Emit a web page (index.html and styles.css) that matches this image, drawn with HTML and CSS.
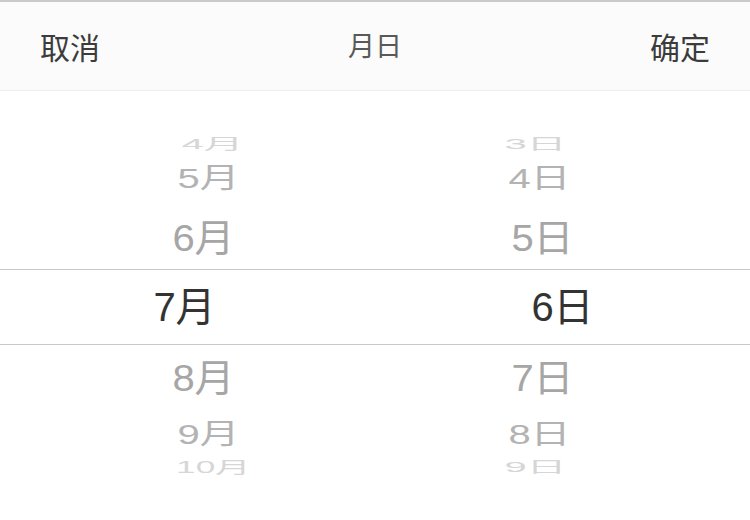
FILE: index.html
```html
<!DOCTYPE html>
<html lang="zh">
<head>
<meta charset="utf-8">
<title>月日</title>
<link rel="stylesheet" href="styles.css">
</head>
<body>
<div class="picker">
  <header class="bar">
    <span class="btn">取消</span>
    <span class="title">月日</span>
    <span class="btn">确定</span>
  </header>
  <div class="wheels">
    <ul class="wheel month">
      <li class="item r3 up3"><span>4月</span></li>
      <li class="item r2 up2"><span>5月</span></li>
      <li class="item r1 up1"><span>6月</span></li>
      <li class="item sel"><span>7月</span></li>
      <li class="item r1 dn1"><span>8月</span></li>
      <li class="item r2 dn2"><span>9月</span></li>
      <li class="item r3 dn3"><span>10月</span></li>
    </ul>
    <ul class="wheel day">
      <li class="item r3 up3"><span>3日</span></li>
      <li class="item r2 up2"><span>4日</span></li>
      <li class="item r1 up1"><span>5日</span></li>
      <li class="item sel"><span>6日</span></li>
      <li class="item r1 dn1"><span>7日</span></li>
      <li class="item r2 dn2"><span>8日</span></li>
      <li class="item r3 dn3"><span>9日</span></li>
    </ul>
  </div>
</div>
</body>
</html>
```
FILE: styles.css
```css
* { box-sizing: border-box; }
html, body {
  margin: 0;
  padding: 0;
  background: #ffffff;
}
body {
  width: 750px;
  height: 520px;
  overflow: hidden;
  font-family: "Liberation Sans", "Noto Sans CJK SC", sans-serif;
}
.picker {
  width: 750px;
  height: 520px;
  background: #ffffff;
}
.bar {
  height: 91px;
  border-top: 2px solid #c9c9c9;
  border-bottom: 1px solid #efefef;
  background: #fbfbfb;
  display: flex;
  align-items: center;
  justify-content: space-between;
  padding: 0 40px;
  font-family: "Noto Sans CJK SC", sans-serif;
}
.btn {
  font-size: 30px;
  color: #3c3c3c;
  width: 60px;
  line-height: 1;
}
.title {
  font-size: 27px;
  color: #595959;
  line-height: 1;
  margin-bottom: 3px;
}
.wheels {
  display: grid;
  grid-template-columns: 375px 375px;
}
.wheel {
  list-style: none;
  margin: 0;
  padding: 47px 0 0 0;
  display: flex;
  flex-direction: column;
}
.item {
  display: flex;
  align-items: center;
  justify-content: center;
  font-size: 40px;
  line-height: 46px;
  white-space: nowrap;
}
.item span { display: block; }
.up3 { height: 11px; }
.up2 { height: 58px; }
.up1 { height: 62px; }
.sel {
  height: 76px;
  border-top: 1px solid #c8c8c8;
  border-bottom: 1px solid #c8c8c8;
  color: #333333;
}
.dn1 { height: 66px; }
.dn2 { height: 45px; }
.dn3 { height: 22px; }

.r1 { color: #a6a6a6; }
.r2 { color: #b3b3b3; }
.r3 { color: #d6d6d6; }

.month .sel span { transform: translateX(-3px); }
.month .r1 span { transform: translateX(16px) scaleY(0.94); }
.month .r2 span { transform: translateX(21px) scaleY(0.7); }
.month .r3 span { transform: translateX(25px) scaleY(0.38); }
.month .dn3 span { transform: translateX(26px) scale(0.88, 0.4); }
.day .r1 span { transform: translateX(-20px) scaleY(0.94); }
.day .r2 span { transform: translateX(-23px) scaleY(0.7); }
.day .r3 span { transform: translateX(-27px) scaleY(0.38); }
```
